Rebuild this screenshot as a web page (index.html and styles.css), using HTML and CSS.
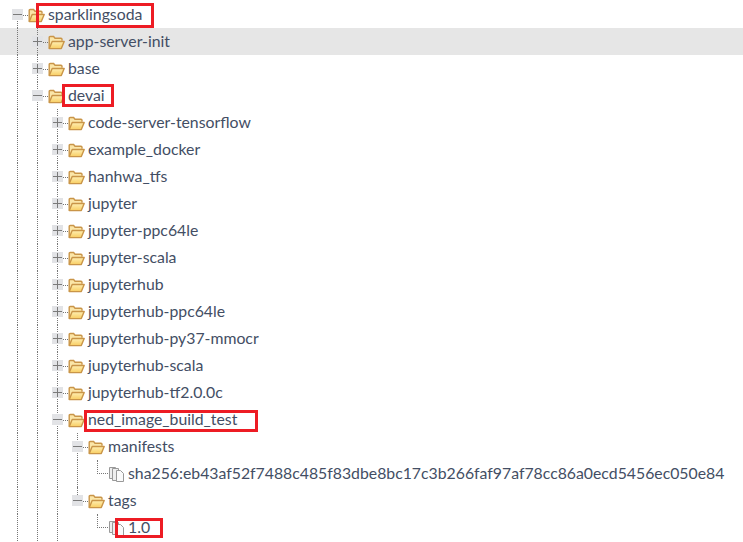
FILE: index.html
```html
<!DOCTYPE html>
<html lang="en">
<head>
<meta charset="utf-8">
<title>Registry tree</title>
<link rel="stylesheet" href="styles.css">
</head>
<body>
<svg class="defs" width="0" height="0" aria-hidden="true">
  <defs>
    <linearGradient id="fg" x1="0" y1="0" x2="0" y2="1">
      <stop offset="0" stop-color="#fff0b4"/>
      <stop offset="1" stop-color="#f8cd62"/>
    </linearGradient>
    <symbol id="folder" viewBox="0 0 17 15">
      <path d="M1.2 13.6V2.6c0-.7.4-1.1 1-1.1h3.4l1.4 1.7h6c.6 0 1 .4 1 1v1.6" fill="#fbe6a8" stroke="#c99548" stroke-width="1.4"/>
      <path d="M1.3 13.6 4.2 6.5h12l-2.9 7.1z" fill="url(#fg)" stroke="#c99548" stroke-width="1.4" stroke-linejoin="round"/>
    </symbol>
    <symbol id="tagicon" viewBox="0 0 17 17">
      <path d="M1.5 1.5h6v11h-6z" fill="#eee" stroke="#999"/>
      <path d="M4.5 2.5h6v12h-6z" fill="#eee" stroke="#999"/>
      <path d="M8.5 4.5h4l3 3v8h-7z" fill="#fafafa" stroke="#999"/>
    </symbol>
    <symbol id="plus" viewBox="0 0 11 11">
      <rect width="11" height="11" fill="#e2e3e6"/>
      <path d="M1 5.5h9M5.5 1v9" stroke="#7a7a7a"/>
    </symbol>
    <symbol id="minus" viewBox="0 0 11 11">
      <rect width="11" height="11" fill="#e2e3e6"/>
      <path d="M1 5.5h9" stroke="#7a7a7a"/>
    </symbol>
  </defs>
</svg>

<main class="tree">
  <div class="row"><span class="exp root"><svg class="box"><use href="#minus"/></svg></span><svg class="ico"><use href="#folder"/></svg><span class="label">sparklingsoda</span></div>

  <div class="row selected"><span class="guide"></span><span class="exp"><svg class="box"><use href="#plus"/></svg></span><svg class="ico"><use href="#folder"/></svg><span class="label">app-server-init</span></div>
  <div class="row"><span class="guide"></span><span class="exp"><svg class="box"><use href="#plus"/></svg></span><svg class="ico"><use href="#folder"/></svg><span class="label">base</span></div>
  <div class="row"><span class="guide"></span><span class="exp"><svg class="box"><use href="#minus"/></svg></span><svg class="ico"><use href="#folder"/></svg><span class="label">devai</span></div>

  <div class="row"><span class="guide"></span><span class="guide"></span><span class="exp"><svg class="box"><use href="#plus"/></svg></span><svg class="ico"><use href="#folder"/></svg><span class="label">code-server-tensorflow</span></div>
  <div class="row"><span class="guide"></span><span class="guide"></span><span class="exp"><svg class="box"><use href="#plus"/></svg></span><svg class="ico"><use href="#folder"/></svg><span class="label">example_docker</span></div>
  <div class="row"><span class="guide"></span><span class="guide"></span><span class="exp"><svg class="box"><use href="#plus"/></svg></span><svg class="ico"><use href="#folder"/></svg><span class="label">hanhwa_tfs</span></div>
  <div class="row"><span class="guide"></span><span class="guide"></span><span class="exp"><svg class="box"><use href="#plus"/></svg></span><svg class="ico"><use href="#folder"/></svg><span class="label">jupyter</span></div>
  <div class="row"><span class="guide"></span><span class="guide"></span><span class="exp"><svg class="box"><use href="#plus"/></svg></span><svg class="ico"><use href="#folder"/></svg><span class="label">jupyter-ppc64le</span></div>
  <div class="row"><span class="guide"></span><span class="guide"></span><span class="exp"><svg class="box"><use href="#plus"/></svg></span><svg class="ico"><use href="#folder"/></svg><span class="label">jupyter-scala</span></div>
  <div class="row"><span class="guide"></span><span class="guide"></span><span class="exp"><svg class="box"><use href="#plus"/></svg></span><svg class="ico"><use href="#folder"/></svg><span class="label">jupyterhub</span></div>
  <div class="row"><span class="guide"></span><span class="guide"></span><span class="exp"><svg class="box"><use href="#plus"/></svg></span><svg class="ico"><use href="#folder"/></svg><span class="label">jupyterhub-ppc64le</span></div>
  <div class="row"><span class="guide"></span><span class="guide"></span><span class="exp"><svg class="box"><use href="#plus"/></svg></span><svg class="ico"><use href="#folder"/></svg><span class="label">jupyterhub-py37-mmocr</span></div>
  <div class="row"><span class="guide"></span><span class="guide"></span><span class="exp"><svg class="box"><use href="#plus"/></svg></span><svg class="ico"><use href="#folder"/></svg><span class="label">jupyterhub-scala</span></div>
  <div class="row"><span class="guide"></span><span class="guide"></span><span class="exp"><svg class="box"><use href="#plus"/></svg></span><svg class="ico"><use href="#folder"/></svg><span class="label">jupyterhub-tf2.0.0c</span></div>
  <div class="row"><span class="guide"></span><span class="guide"></span><span class="exp"><svg class="box"><use href="#minus"/></svg></span><svg class="ico"><use href="#folder"/></svg><span class="label">ned_image_build_test</span></div>

  <div class="row"><span class="guide"></span><span class="guide"></span><span class="guide"></span><span class="exp"><svg class="box"><use href="#minus"/></svg></span><svg class="ico"><use href="#folder"/></svg><span class="label">manifests</span></div>
  <div class="row"><span class="guide"></span><span class="guide"></span><span class="guide"></span><span class="guide"></span><span class="elbow"></span><svg class="ico leaf"><use href="#tagicon"/></svg><span class="label">sha256:eb43af52f7488c485f83dbe8bc17c3b266faf97af78cc86a0ecd5456ec050e84</span></div>
  <div class="row"><span class="guide"></span><span class="guide"></span><span class="guide"></span><span class="exp last"><svg class="box"><use href="#minus"/></svg></span><svg class="ico"><use href="#folder"/></svg><span class="label">tags</span></div>
  <div class="row"><span class="guide"></span><span class="guide"></span><span class="guide"></span><span class="guide blank"></span><span class="elbow"></span><svg class="ico leaf"><use href="#tagicon"/></svg><span class="label">1.0</span></div>
</main>

<div class="mark mark-root"></div>
<div class="mark mark-devai"></div>
<div class="mark mark-ned"></div>
<div class="mark mark-tag"></div>
</body>
</html>
```

FILE: styles.css
```css
html, body {
  margin: 0;
  padding: 0;
  height: 100%;
  background: #fff;
  overflow: hidden;
}
.defs { position: absolute; }
.tree {
  padding-top: 1px;
  font-family: "Lato", "Open Sans", sans-serif;
  font-size: 15.8px;
  color: #434e64;
}
.row {
  display: flex;
  align-items: center;
  height: 27px;
  padding-left: 17px;
  white-space: nowrap;
}
.row.selected { background: #e6e6e6; }
.guide {
  flex: none;
  align-self: stretch;
  width: 20px;
  border-left: 1px dotted #777;
  box-sizing: border-box;
}
.guide.blank { border-left-color: transparent; }
.exp {
  flex: none;
  align-self: stretch;
  position: relative;
  display: flex;
  align-items: center;
  width: 11px;
  margin-left: -5px;
  margin-right: 5px;
}
.exp::before {
  content: "";
  position: absolute;
  left: 5px;
  top: 0;
  bottom: 0;
  border-left: 1px dotted #777;
}
.exp.root::before { top: 50%; }
.exp.last::before { bottom: 50%; }
.exp::after {
  content: "";
  position: absolute;
  left: 11px;
  top: 50%;
  width: 5px;
  border-top: 1px dotted #777;
}
.box {
  position: relative;
  width: 11px;
  height: 11px;
}
.elbow {
  flex: none;
  align-self: flex-start;
  width: 11px;
  height: 14px;
  border-left: 1px dotted #777;
  border-bottom: 1px dotted #777;
  box-sizing: border-box;
}
.ico {
  flex: none;
  width: 17px;
  height: 15px;
  margin-top: 2px;
  margin-right: 3px;
}
.ico.leaf { height: 17px; }
.label {
  line-height: 27px;
  margin-bottom: 2px;
}
.mark {
  position: absolute;
  box-sizing: border-box;
  border: 3px solid #ed1c24;
}
.mark-root { left: 36px; top: 3px; width: 118px; height: 25px; }
.mark-devai { left: 62px; top: 84px; width: 52px; height: 23px; }
.mark-ned { left: 84px; top: 410px; width: 174px; height: 22px; }
.mark-tag { left: 115px; top: 518px; width: 48px; height: 20px; }
```
